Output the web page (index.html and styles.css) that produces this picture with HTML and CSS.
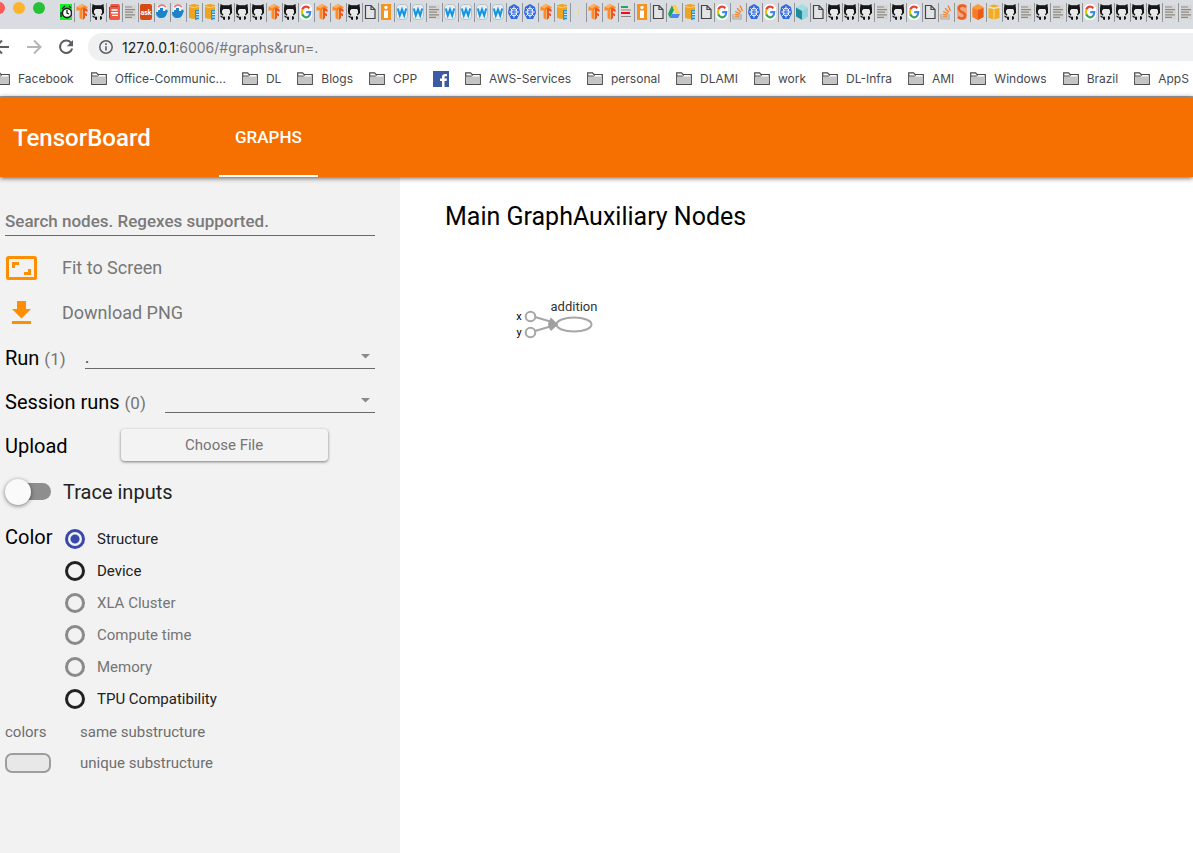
FILE: index.html
```html
<!DOCTYPE html>
<html lang="en">
<head>
<meta charset="utf-8">
<title>TensorBoard</title>
<link rel="stylesheet" href="styles.css">
</head>
<body>
<svg class="sprite" aria-hidden="true">
  <symbol id="clock" viewBox="0 0 12 16"><path fill="#10f028" d="M0 0h12v16H0z"/><circle cx="7" cy="9" r="4.600" fill="#fff" stroke="#222" stroke-width="1.600"/><path d="M7 6v3l2 1M2 5l3-3M9 2l2 2M1 8v5" fill="none" stroke="#222" stroke-width="1.300"/></symbol>
  <symbol id="tf" viewBox="0 0 12 16"><path fill="#ff8a20" d="M6 0 .5 3v4l3-1v8l3 2V6l2 1V5l3-1V3z"/><path fill="#f4551e" d="M7 3.500 11.500 5v3L9 7v2l2 .8v2.500L9 11.500V14l-2 2z"/><path fill="#ffb066" d="M6 0 1 3l3 1.200L8 2z"/></symbol>
  <symbol id="gh" viewBox="0 0 12 16"><path fill="#e8eaec" d="M2 5h8v7H2z"/><path fill="#161616" d="M.5 0 3 1.200h6L11.500 0l.5 5v4L9.500 11.500l-.5-1L10 9V6.500L9 5H3.500L2 6.500V9l1.500 1.800-.6 1L.5 10 0 8V5z"/><path fill="#161616" d="M.5 11.500 3 12.700h2V16l-2-.6V14l-2.500-1zM8 12l2 .8V15l-2 1z"/></symbol>
  <symbol id="redis" viewBox="0 0 12 16"><path fill="#ee5a43" d="M3 0h8l1 2v13l-1 1H2l-1-2 .5-11z"/><path stroke="#fff" stroke-width="1.400" d="M3.500 6h6M3 8.700h7M4 11.400h6"/><path stroke="#b7392a" d="M1.500 3v11M3 2.500h7"/></symbol>
  <symbol id="lines" viewBox="0 0 12 16"><path fill="#d6d4d1" d="M1 1h11v14H1z"/><path stroke="#8d8b88" stroke-width="1.200" d="M1 3h7M1 5.600h10M1 8.200h8M1 10.800h10M1 13.400h7"/></symbol>
  <symbol id="clines" viewBox="0 0 12 16"><path fill="#ddd" d="M1 1h11v14H1z"/><path stroke="#27a35b" stroke-width="2" d="M1 3h7"/><path stroke="#888" stroke-width="1.200" d="M1 6h10M1 12.500h10"/><path stroke="#f00c18" stroke-width="2" d="M1 9h9"/></symbol>
  <symbol id="docker" viewBox="0 0 12 16"><path fill="#fff" opacity=".6" d="M1 1h10v14H1z"/><path fill="none" stroke="#f46a5e" stroke-width="1.200" d="M2 3c3-3 6-2 8 0"/><path fill="#1d83c8" d="M0 8h2V6h2V4h3v3h2l1-2 2 2-1 2c-1 5-4 5-6 5C2 14 0 12 0 8z"/><path stroke="#aad8f5" d="M1 13c3 3 7 3 10 0" fill="none"/></symbol>
  <symbol id="aws" viewBox="0 0 12 16"><path fill="#eda51f" d="M1 1l5-1 5 1v5H8v8l-3 1-4-1z"/><path stroke="#f8d080" d="M1 2.500l5 1 5-1" fill="none"/><path fill="#2b91cc" d="M7 6h4v9l-4 1z"/><path stroke="#d8efff" d="M8 8h3M8 10.500h3M8 13h3"/></symbol>
  <symbol id="g" viewBox="0 0 12 16"><rect width="12" height="16" rx="5" fill="#fff"/><g fill="none" stroke-width="2.200"><path stroke="#ea4335" d="M2.200 5.500C4 1.500 7.500 2 9.300 4.300"/><path stroke="#fbbc05" d="M2.300 5.300c-.6 1.700-.6 3.500 0 5.200"/><path stroke="#34a853" d="M2.200 10.300c1.500 3.500 4.800 3.800 6.900 1.700"/><path stroke="#4285f4" d="M6.200 8.200h4c0 1.800-.4 3-1.400 4"/></g></symbol>
  <symbol id="doc" viewBox="0 0 12 16"><path d="M1.500 1.500h5.500l4 4v9h-9.500zM7 1.500v4h4" fill="#e2e4e6" stroke="#444" stroke-width="1.200"/></symbol>
  <symbol id="info" viewBox="0 0 12 16"><path fill="#f6921e" d="M1 0h10v16H1z"/><circle cx="6" cy="3.500" r="1.700" fill="#fff"/><path fill="#fff" d="M4 6.500h4V14H4z"/></symbol>
  <symbol id="w" viewBox="0 0 12 16"><rect x=".5" y=".5" width="11" height="15" rx="3" fill="#e8eef2" stroke="#b8c0c5"/><path fill="none" stroke="#1195e0" stroke-width="2" d="M1.800 4.500l2 7L6 5.500l2.200 6 2-7"/></symbol>
  <symbol id="k8s" viewBox="0 0 12 16"><path fill="#2f67de" d="M6 0l5 3 1 6-3 6H3L0 9l1-6z"/><ellipse cx="6" cy="8" rx="3" ry="4" fill="none" stroke="#fff"/><path stroke="#fff" stroke-width=".7" d="M6 2v12M1 8h10M2 4l8 8M10 4l-8 8"/><circle cx="6" cy="8" r="1" fill="#2f67de"/></symbol>
  <symbol id="faint" viewBox="0 0 12 16"><path stroke="#e3d6a8" d="M6.500 4v8"/></symbol>
  <symbol id="drive" viewBox="0 0 12 16"><path fill="#1aa260" d="M4 1 0 10l2 4 4-8z"/><path fill="#ffcf48" d="M4 1h4l4 9H8z"/><path fill="#4688f4" d="M4 10h8l-2 4H2z"/></symbol>
  <symbol id="so" viewBox="0 0 12 16"><path fill="none" stroke="#a8a8a8" stroke-width="1.200" d="M1 10v5h8v-5"/><path stroke="#f48024" stroke-width="1.300" d="M2.500 12.800h5M2.600 10.500l5 .7M3.200 7.500l4.800 2.200M5 4.200l4 4M8 1.500l2.500 5.500"/></symbol>
  <symbol id="cube" viewBox="0 0 12 16"><path fill="#9ee0e6" d="M6 0l6 3.500L6 7 0 3.500z"/><path fill="#1f8d98" d="M0 3.500 6 7v9l-6-3.500z"/><path fill="#8fd6df" d="M12 3.500 6 7v9l6-3.500z"/></symbol>
  <symbol id="s" viewBox="0 0 12 16"><rect x="1" width="10" height="16" rx="4" fill="#eda882"/><path fill="none" stroke="#e8601f" stroke-width="2.600" d="M10 3C7 0 2 2 3 5.500S10 8 9 12s-5 2.500-7 1"/></symbol>
  <symbol id="ocube" viewBox="0 0 12 16"><path fill="#ff9a3a" d="M6 0l5.500 3v10L6 16 .5 13V3z"/><path fill="#e85c1b" d="M6 6l5.500-2v9L6 16z"/><path fill="#f77b22" d="M6 6 .5 4v9L6 16z"/></symbol>
  <symbol id="ycube" viewBox="0 0 12 16"><path fill="#f0ac22" d="M.5 4 6 5v10.500L.5 14zM11.500 4 6 5v10.500l5.500-1.500z"/><path fill="#f0ac22" d="M.5 2 6 .5 11.500 2 6 3.500z"/><path stroke="#fae09a" d="M6 5v10.500M.5 3.200 6 4.300l5.500-1.100" fill="none"/></symbol>
  <symbol id="folder" viewBox="0 0 16 13"><path d="M.7 12.300V.8h4.800l1.500 1.700h8.300v9.800z" fill="#fff" stroke="#4a4a4a" stroke-width="1.200"/><path d="M1.300 4.500h13.400v7.200H1.300z" fill="#c4c4c4"/><path d="M1 4h5.500L8 2.800" stroke="#4a4a4a" fill="none"/></symbol>
</svg>

<div class="browser">
  <div class="tabstrip">
    <div class="lights"><i class="light red"></i><i class="light yellow"></i><i class="light green"></i></div>
    <div class="tabs">
      <svg class="tab"><use href="#clock"/></svg><svg class="tab"><use href="#tf"/></svg><svg class="tab"><use href="#gh"/></svg><svg class="tab"><use href="#redis"/></svg><svg class="tab"><use href="#lines"/></svg><svg class="tab" viewBox="0 0 12 16"><rect width="12" height="16" rx="2" fill="#d64b12"/><text x="6" y="11" class="glyph">ask</text></svg><svg class="tab"><use href="#docker"/></svg><svg class="tab"><use href="#docker"/></svg><svg class="tab"><use href="#aws"/></svg><svg class="tab"><use href="#aws"/></svg>
      <svg class="tab"><use href="#gh"/></svg><svg class="tab"><use href="#gh"/></svg><svg class="tab"><use href="#gh"/></svg><svg class="tab"><use href="#tf"/></svg><svg class="tab"><use href="#gh"/></svg><svg class="tab"><use href="#g"/></svg><svg class="tab"><use href="#tf"/></svg><svg class="tab"><use href="#tf"/></svg><svg class="tab"><use href="#gh"/></svg><svg class="tab"><use href="#doc"/></svg>
      <svg class="tab"><use href="#info"/></svg><svg class="tab"><use href="#w"/></svg><svg class="tab"><use href="#w"/></svg><svg class="tab"><use href="#lines"/></svg><svg class="tab"><use href="#w"/></svg><svg class="tab"><use href="#w"/></svg><svg class="tab"><use href="#w"/></svg><svg class="tab"><use href="#w"/></svg><svg class="tab"><use href="#k8s"/></svg><svg class="tab"><use href="#k8s"/></svg>
      <svg class="tab"><use href="#tf"/></svg><svg class="tab"><use href="#aws"/></svg><svg class="tab"><use href="#faint"/></svg><svg class="tab"><use href="#tf"/></svg><svg class="tab"><use href="#tf"/></svg><svg class="tab"><use href="#clines"/></svg><svg class="tab"><use href="#info"/></svg><svg class="tab"><use href="#doc"/></svg><svg class="tab"><use href="#drive"/></svg><svg class="tab"><use href="#aws"/></svg>
      <svg class="tab"><use href="#doc"/></svg><svg class="tab"><use href="#g"/></svg><svg class="tab"><use href="#so"/></svg><svg class="tab"><use href="#k8s"/></svg><svg class="tab"><use href="#g"/></svg><svg class="tab"><use href="#k8s"/></svg><svg class="tab"><use href="#cube"/></svg><svg class="tab"><use href="#doc"/></svg><svg class="tab"><use href="#gh"/></svg><svg class="tab"><use href="#gh"/></svg>
      <svg class="tab"><use href="#gh"/></svg><svg class="tab"><use href="#lines"/></svg><svg class="tab"><use href="#gh"/></svg><svg class="tab"><use href="#g"/></svg><svg class="tab"><use href="#doc"/></svg><svg class="tab"><use href="#so"/></svg><svg class="tab"><use href="#s"/></svg><svg class="tab"><use href="#ocube"/></svg><svg class="tab"><use href="#ycube"/></svg><svg class="tab"><use href="#gh"/></svg>
      <svg class="tab"><use href="#lines"/></svg><svg class="tab"><use href="#gh"/></svg><svg class="tab"><use href="#lines"/></svg><svg class="tab"><use href="#gh"/></svg><svg class="tab"><use href="#g"/></svg><svg class="tab"><use href="#gh"/></svg><svg class="tab"><use href="#gh"/></svg><svg class="tab"><use href="#gh"/></svg><svg class="tab"><use href="#gh"/></svg><svg class="tab"><use href="#lines"/></svg><svg class="tab"><use href="#lines"/></svg>
    </div>
  </div>
  <div class="toolbar">
    <button class="nav-btn" aria-label="Back"><svg width="16" height="16" viewBox="0 0 16 16"><path d="M15 8H2M8 1.500 1.500 8 8 14.500" fill="none" stroke="#5b5e63" stroke-width="2"/></svg></button>
    <button class="nav-btn" aria-label="Forward"><svg width="16" height="16" viewBox="0 0 16 16"><path d="M1 8h13M8 1.500 14.500 8 8 14.500" fill="none" stroke="#b4b6b9" stroke-width="2"/></svg></button>
    <button class="nav-btn" aria-label="Reload"><svg width="16" height="16" viewBox="0 0 16 16"><path d="M13.300 4.200A6.200 6.200 0 1 0 14.200 9.500" fill="none" stroke="#5b5e63" stroke-width="2"/><path d="M15 1v6.200H8.800z" fill="#5b5e63"/></svg></button>
    <div class="omnibox">
      <svg width="14" height="14" viewBox="0 0 14 14"><circle cx="7" cy="7" r="6.200" fill="none" stroke="#5b5e63" stroke-width="1.500"/><path d="M7 6.200v4.300M7 3.300v1.600" stroke="#5b5e63" stroke-width="1.600"/></svg>
      <span class="url"><span class="host">127.0.0.1</span>:6006/#graphs&amp;run=.</span>
    </div>
  </div>
  <nav class="bookmarks">
    <a href="#"><svg class="folder"><use href="#folder"/></svg>Facebook</a>
    <a href="#"><svg class="folder"><use href="#folder"/></svg>Office-Communic...</a>
    <a href="#"><svg class="folder"><use href="#folder"/></svg>DL</a>
    <a href="#"><svg class="folder"><use href="#folder"/></svg>Blogs</a>
    <a href="#"><svg class="folder"><use href="#folder"/></svg>CPP</a>
    <a href="#" aria-label="Facebook"><svg width="16" height="16" viewBox="0 0 16 16"><path fill="#3b5ba5" d="M0 0h16v16H0z"/><path fill="#fff" d="M9 16v-6H7V7.600h2V6c0-2.200 1.300-3 3-3h2v2.300h-1.300c-.9 0-1.200.4-1.200 1.200v1.100H14l-.4 2.400h-2.100v6z"/></svg></a>
    <a href="#"><svg class="folder"><use href="#folder"/></svg>AWS-Services</a>
    <a href="#"><svg class="folder"><use href="#folder"/></svg>personal</a>
    <a href="#"><svg class="folder"><use href="#folder"/></svg>DLAMI</a>
    <a href="#"><svg class="folder"><use href="#folder"/></svg>work</a>
    <a href="#"><svg class="folder"><use href="#folder"/></svg>DL-Infra</a>
    <a href="#"><svg class="folder"><use href="#folder"/></svg>AMI</a>
    <a href="#"><svg class="folder"><use href="#folder"/></svg>Windows</a>
    <a href="#"><svg class="folder"><use href="#folder"/></svg>Brazil</a>
    <a href="#"><svg class="folder"><use href="#folder"/></svg>AppS</a>
  </nav>
</div>

<header class="header">
  <div class="brand">TensorBoard</div>
  <a class="header-tab" href="#graphs">GRAPHS</a>
</header>

<div class="content">
  <aside class="sidebar">
    <input class="search" type="text" placeholder="Search nodes. Regexes supported." aria-label="Search nodes">
    <button class="action"><svg width="32" height="26" viewBox="0 0 32 26"><rect x="2.500" y="2.500" width="28" height="21" rx="1" fill="none" stroke="#ff8f00" stroke-width="3"/><path d="M8.500 13V8.500H14M24.500 14v4.500H19" fill="none" stroke="#ff8f00" stroke-width="3"/></svg>Fit to Screen</button>
    <button class="action"><svg width="32" height="26" viewBox="0 0 32 26"><path fill="#ff8f00" d="M12 1h9v8h5l-9.500 9.500L7 9h5zM7 21h19v3H7z"/></svg>Download PNG</button>
    <div class="row">
      <label class="title" for="run">Run <span class="count">(1)</span></label>
      <div class="picker"><select id="run"><option>.</option></select><svg width="10" height="5" viewBox="0 0 10 5"><path fill="#8a8a8a" d="M0 0h9L4.500 4.500z"/></svg></div>
    </div>
    <div class="row">
      <label class="title" for="session">Session runs <span class="count">(0)</span></label>
      <div class="picker"><select id="session"><option></option></select><svg width="10" height="5" viewBox="0 0 10 5"><path fill="#8a8a8a" d="M0 0h9L4.500 4.500z"/></svg></div>
    </div>
    <div class="row upload">
      <span class="title">Upload</span>
      <button class="choose">Choose File</button>
    </div>
    <label class="trace"><input class="toggle" type="checkbox">Trace inputs</label>
    <div class="color">
      <span class="title" id="color-label">Color</span>
      <div class="options" role="radiogroup" aria-labelledby="color-label">
        <label><input type="radio" name="color" checked>Structure</label>
        <label><input type="radio" name="color">Device</label>
        <label><input type="radio" name="color" disabled>XLA Cluster</label>
        <label><input type="radio" name="color" disabled>Compute time</label>
        <label><input type="radio" name="color" disabled>Memory</label>
        <label><input type="radio" name="color">TPU Compatibility</label>
      </div>
    </div>
    <div class="legend">
      <span>colors</span><span>same substructure</span>
      <i class="swatch"></i><span>unique substructure</span>
    </div>
  </aside>
  <main class="main">
    <h1 class="graph-title"><span>Main Graph</span><span>Auxiliary Nodes</span></h1>
    <svg class="graph" width="110" height="50" viewBox="0 0 110 50">
      <g fill="#fff" stroke="#a6a6a6" stroke-width="2">
        <path d="M25 22 42 27M25 36 42 31" fill="none"/>
        <circle cx="20.500" cy="21.500" r="4.800"/>
        <circle cx="20.500" cy="37.500" r="4.800"/>
        <ellipse cx="64" cy="29.500" rx="17.500" ry="7"/>
      </g>
      <path fill="#a0a0a0" d="M41 22.500 48 29.500 41 36 39 33 38 29.500 39 26z"/>
      <text class="node-name" x="64" y="16">addition</text>
      <text class="node-input" x="9" y="25">x</text>
      <text class="node-input" x="9" y="41">y</text>
    </svg>
  </main>
</div>
</body>
</html>
```

FILE: styles.css
```css
* { box-sizing: border-box; }
html, body { margin: 0; }
body {
  display: flex;
  flex-direction: column;
  min-height: 100vh;
  overflow-x: hidden;
  background: #fff;
  color: #000;
  font-family: Roboto, sans-serif;
}
button, input, select { font: inherit; color: inherit; margin: 0; padding: 0; border: 0; background: none; }
svg { display: block; flex: none; }
.sprite { width: 0; height: 0; position: absolute; }
.glyph { font: 700 7px Roboto, sans-serif; text-anchor: middle; fill: #fff; }

.browser { border-bottom: 1px solid #a9a9ad; overflow: hidden; font-family: Inter, sans-serif; }
.tabstrip { display: flex; height: 29px; background: #d9dce0; }
.lights { display: flex; gap: 8px; width: 52px; flex: none; margin: 2px 14px 0 -7px; }
.light { width: 12px; height: 12px; border-radius: 50%; }
.red { background: #fc5b57; }
.yellow { background: #fdb32b; }
.green { background: #27c138; }
.tabs { display: flex; padding-top: 3px; }
.tab { width: 16px; height: 19px; padding: 1px 2px 2px 1px; border-right: 1px solid #92959a; }

.toolbar { display: flex; align-items: center; height: 36px; }
.nav-btn { width: 16px; flex: none; margin-right: 16px; }
.nav-btn:first-child { margin-left: -6px; }
.omnibox {
  display: flex;
  align-items: center;
  gap: 9px;
  flex: 1;
  height: 28px;
  margin-left: -2px;
  padding-left: 11px;
  border-radius: 14px 0 0 14px;
  background: #eff0f2;
}
.url { font-size: 14px; color: #74777c; }
.host { color: #202124; }

.bookmarks { display: flex; align-items: center; gap: 16px; height: 31px; padding-bottom: 4px; margin-left: -6px; }
.bookmarks a { display: flex; align-items: center; gap: 8px; flex: none; font-size: 12px; color: #45484d; text-decoration: none; }
.bookmarks a:first-child { margin-right: 1px; }
.folder { width: 16px; height: 13px; }

.header {
  display: flex;
  align-items: stretch;
  height: 80px;
  padding-left: 13px;
  position: relative;
  background: #f57000;
  color: #fff;
  box-shadow: 0 1px 5px rgba(0, 0, 0, .65);
}
.brand { width: 206px; line-height: 82px; font-size: 24px; font-weight: 500; }
.header-tab { padding: 0 16px; line-height: 80px; height: 80px; border-bottom: 2px solid #fff; color: #fff; font-size: 17px; font-weight: 500; text-decoration: none; }

.content { display: flex; flex: 1; }
.sidebar { width: 400px; flex: none; padding: 30px 25px 20px 5px; background: #f2f2f2; }
.search { display: block; width: 100%; height: 29px; border-bottom: 1px solid #6a6a6a; font-size: 17px; }
.search::placeholder { color: #7a7a7a; opacity: 1; font-weight: 500; }
.action { display: flex; align-items: center; gap: 25px; height: 45px; font-size: 18px; color: #777; }
.search + .action { margin-top: 9px; }
.action + .row { margin-top: 1px; }
.row { display: flex; align-items: center; height: 44px; }
.title { font-size: 20px; }
.count { font-size: 17px; color: #757575; }
.picker { display: flex; align-items: center; flex: 1; height: 24px; margin: 0 0 2px 19px; border-bottom: 1px solid #6a6a6a; }
.picker select { flex: 1; appearance: none; font-size: 18px; color: #555; }
.picker svg { margin-right: 4px; }
.upload { gap: 53px; }
.choose { width: 207px; height: 32px; margin-bottom: 2px; border-radius: 4px; background: #f3f3f3; color: #757575; font-size: 15px; box-shadow: 0 1px 3px rgba(0, 0, 0, .5); }
.trace { display: flex; align-items: center; gap: 12px; height: 47px; font-size: 20px; color: #222; }
.toggle { appearance: none; display: flex; align-items: center; width: 46px; height: 17px; border-radius: 9px; background: linear-gradient(90deg, transparent 12px, #8e8e8e 12px); }
.toggle::before { content: ""; width: 26px; height: 26px; flex: none; border-radius: 50%; background: #fafafa; box-shadow: 0 1px 4px rgba(0, 0, 0, .5); }
.color { display: flex; }
.color .title { width: 60px; line-height: 44px; }
.options { display: grid; padding: 8px 0 1px; }
.options label { display: flex; align-items: center; gap: 12px; height: 32px; font-size: 15px; color: #212121; }
.options label:has(:disabled) { color: #757575; }
.options input { appearance: none; width: 20px; height: 20px; border: 3px solid #212121; border-radius: 50%; }
.options input:checked { border-color: #3949ab; background: radial-gradient(circle, #3949ab 4px, transparent 5px); }
.options input:disabled { border-color: #8a8a8a; }
.legend { display: grid; grid-template-columns: 75px 1fr; grid-auto-rows: 31px; align-items: center; font-size: 15px; color: #6e6e6e; }
.swatch { width: 46px; height: 20px; border: 2px solid #9e9e9e; border-radius: 7px; background: #e8e8e8; }

.main { flex: 1; min-width: 0; padding: 24px 45px; }
.graph-title { margin: 0; font-size: 25px; font-weight: 400; line-height: 32px; }
.graph { margin: 62px 0 0 65px; }
.node-name { font-size: 13px; fill: #333; text-anchor: middle; }
.node-input { font-size: 11px; fill: #000; text-anchor: middle; }
```
